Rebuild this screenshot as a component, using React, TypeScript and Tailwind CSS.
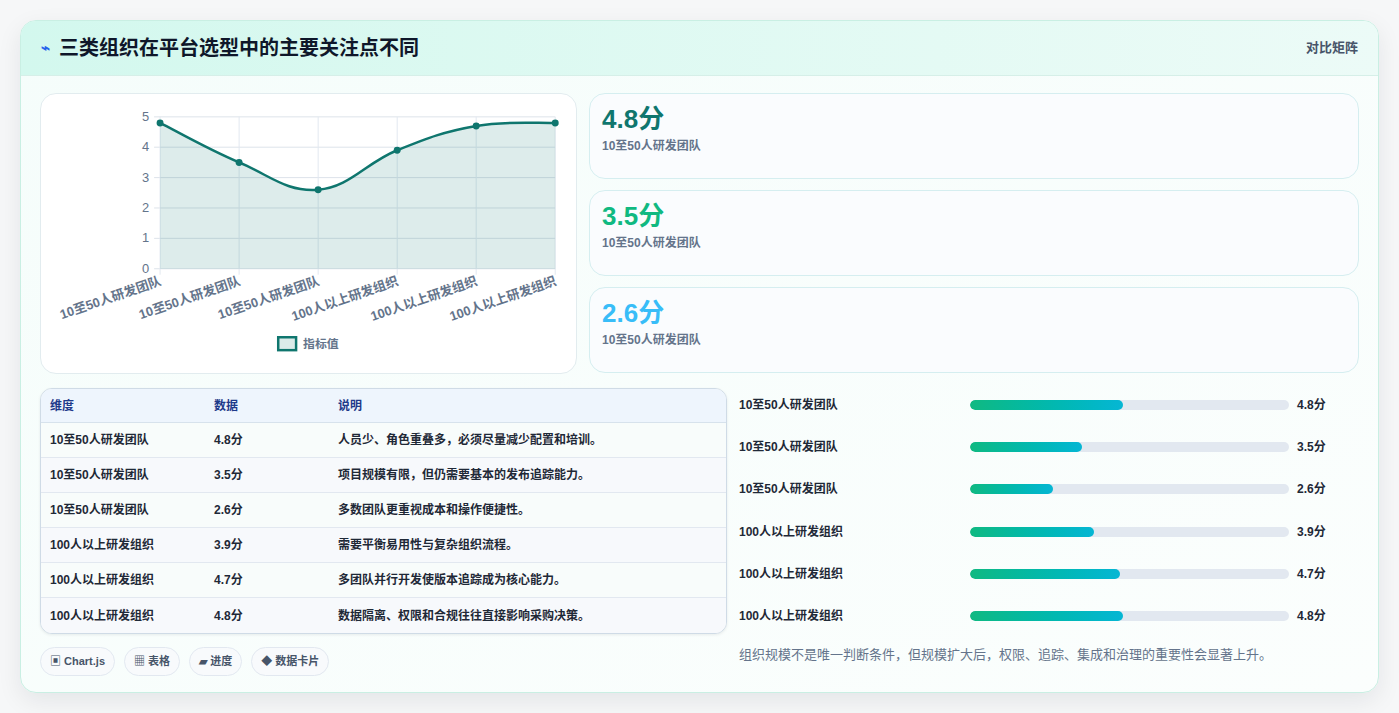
import React from "react";

const F = { fontFamily: '"Liberation Sans","Noto Sans CJK SC",sans-serif' };
const vals = [4.8, 3.5, 2.6, 3.9, 4.7, 4.8];
const labels = ["10至50人研发团队", "10至50人研发团队", "10至50人研发团队", "100人以上研发组织", "100人以上研发组织", "100人以上研发组织"];
const descs = ["人员少、角色重叠多，必须尽量减少配置和培训。", "项目规模有限，但仍需要基本的发布追踪能力。", "多数团队更重视成本和操作便捷性。", "需要平衡易用性与复杂组织流程。", "多团队并行开发使版本追踪成为核心能力。", "数据隔离、权限和合规往往直接影响采购决策。"];

const xs = [158, 237.6, 317.2, 396.8, 476.4, 556];
const y = (v: number) => 268 - 30.6 * v;
const pts = vals.map((v, i) => [xs[i], y(v)]);
function curve() {
  let d = `M${pts[0][0]},${pts[0][1]}`;
  for (let i = 0; i < pts.length - 1; i++) {
    const p0 = pts[Math.max(0, i - 1)], p1 = pts[i], p2 = pts[i + 1], p3 = pts[Math.min(pts.length - 1, i + 2)];
    const t = 0.4 / 2;
    const c1 = [p1[0] + (p2[0] - p0[0]) * t, p1[1] + (p2[1] - p0[1]) * t];
    const c2 = [p2[0] - (p3[0] - p1[0]) * t, p2[1] - (p3[1] - p1[1]) * t];
    d += ` C${c1[0]},${c1[1]} ${c2[0]},${c2[1]} ${p2[0]},${p2[1]}`;
  }
  return d;
}

function Chart() {
  const d = curve();
  return (
    <svg viewBox="39 92 537 281" className="w-full h-full" style={F}>
      {[0, 1, 2, 3, 4, 5].map((v) => (
        <g key={v}>
          <line x1={152} x2={556} y1={y(v)} y2={y(v)} stroke="#dde3ea" strokeWidth={1} />
          <text x={147} y={y(v) + 4} fontSize={13} fill="#64748b" textAnchor="end">{v}</text>
        </g>
      ))}
      {xs.map((x, i) => (
        <line key={i} x1={x} x2={x} y1={115} y2={274} stroke="#e2e8f0" strokeWidth={1} />
      ))}
      <path d={`${d} L556,268 L158,268 Z`} fill="#0f766e" fillOpacity={0.14} />
      <path d={d} fill="none" stroke="#0f766e" strokeWidth={2.5} />
      {pts.map((p, i) => (
        <circle key={i} cx={p[0]} cy={p[1]} r={3.5} fill="#0f766e" />
      ))}
      {labels.map((l, i) => (
        <text key={i} x={xs[i] + 2} y={284} fontSize={13} fontWeight={600} fill="#64748b" textAnchor="end" transform={`rotate(-19 ${xs[i] + 2} 284)`}>{l}</text>
      ))}
      <rect x={277} y={337} width={18} height={13} fill="#0f766e" fillOpacity={0.15} stroke="#0f766e" strokeWidth={2.5} />
      <text x={302} y={348} fontSize={12} fontWeight={700} fill="#64748b">指标值</text>
    </svg>
  );
}

const statColors = ["text-[#0f766e]", "text-[#10b981]", "text-[#38bdf8]"];

export default function App() {
  return (
    <div className="min-h-[713px] bg-[#f6f7f8] p-5 pt-5" style={F}>
      <div className="rounded-2xl border border-[#c9efe3] bg-gradient-to-br from-[#f5fdfb] to-[#fbfefd] shadow-[0_8px_24px_rgba(15,23,42,0.08)] overflow-hidden h-[673px]">
        <div className="h-[55px] flex items-center justify-between px-5 bg-gradient-to-r from-[#d3f8ee] to-[#ecfbf7] border-b border-[#d6efe8]">
          <div className="flex items-center gap-[9px]">
            <span className="text-[#2563eb] text-[15px] font-bold">⌁</span>
            <span className="text-[20px] font-bold text-[#0f172a]">三类组织在平台选型中的主要关注点不同</span>
          </div>
          <span className="text-[13px] font-bold text-[#475569]">对比矩阵</span>
        </div>
        <div className="px-[19px] pt-[17px]">
          <div className="flex gap-3">
            <div className="w-[537px] h-[281px] rounded-2xl border border-[#e2ecef] bg-white shrink-0">
              <Chart />
            </div>
            <div className="flex-1 flex flex-col gap-[11px]">
              {["4.8分", "3.5分", "2.6分"].map((s, i) => (
                <div key={i} className="h-[86px] rounded-2xl border border-[#d5eef0] bg-[#fafcfe] px-[12px] pt-[9px]">
                  <div className={`text-[26px] font-bold leading-[32px] ${statColors[i]}`}>{s}</div>
                  <div className="text-[12px] font-bold text-[#64748b] mt-[2px]">10至50人研发团队</div>
                </div>
              ))}
            </div>
          </div>
          <div className="flex gap-3 mt-[14px]">
            <div className="w-[687px] shrink-0">
              <div className="rounded-xl border border-[#cfdbe6] overflow-hidden bg-white shadow-[0_1px_3px_rgba(15,23,42,0.08)]">
                <div className="flex h-[34px] items-center bg-[#eef5fd] border-b border-[#d7e2ec] text-[12px] font-bold text-[#1e3a8a]">
                  <div className="w-[173px] pl-[9px]">维度</div>
                  <div className="w-[124px]">数据</div>
                  <div>说明</div>
                </div>
                {labels.map((l, i) => (
                  <div key={i} className={`flex h-[35px] items-center text-[12px] font-bold text-[#1f2937] ${i < 5 ? "border-b border-[#e2e8f0]" : ""} ${i % 2 ? "bg-[#f7f9fc]" : "bg-[#f8fcfb]"}`}>
                    <div className="w-[173px] pl-[9px]">{l}</div>
                    <div className="w-[124px]">{vals[i]}分</div>
                    <div>{descs[i]}</div>
                  </div>
                ))}
              </div>
              <div className="flex gap-[9px] mt-[13px]">
                {["▣ Chart.js", "▦ 表格", "▰ 进度", "◆ 数据卡片"].map((c) => (
                  <span key={c} className="h-[29px] px-[9px] flex items-center rounded-full border border-[#e2e8f0] bg-[#f8fafc] text-[11px] font-bold text-[#475569]">{c}</span>
                ))}
              </div>
            </div>
            <div className="flex-1 -mt-[4px]">
              {labels.map((l, i) => (
                <div key={i} className="flex items-center h-[42.2px]">
                  <div className="w-[231px] text-[12px] font-bold text-[#1f2937]">{l}</div>
                  <div className="w-[319px] h-[10px] rounded-full bg-[#e2e8f0] overflow-hidden">
                    <div className="h-full rounded-full bg-gradient-to-r from-[#10b981] to-[#06b6d4]" style={{ width: `${vals[i] * 10}%` }} />
                  </div>
                  <div className="ml-2 text-[12px] font-bold text-[#1f2937]">{vals[i]}分</div>
                </div>
              ))}
              <div className="mt-[8px] text-[13px] text-[#64748b]">组织规模不是唯一判断条件，但规模扩大后，权限、追踪、集成和治理的重要性会显著上升。</div>
            </div>
          </div>
        </div>
      </div>
    </div>
  );
}
